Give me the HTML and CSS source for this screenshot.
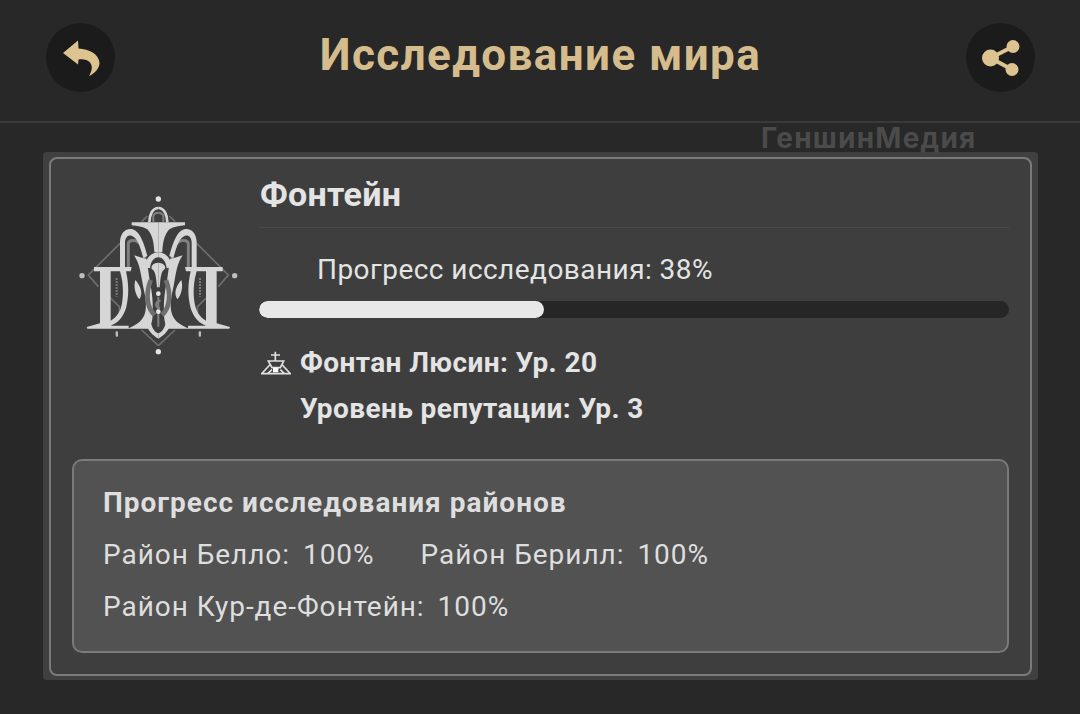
FILE: index.html
```html
<!DOCTYPE html>
<html lang="ru">
<head>
<meta charset="utf-8">
<title>Исследование мира</title>
<link rel="stylesheet" href="styles.css">
</head>
<body>
<header class="header">
  <button class="round-btn" aria-label="Назад">
    <svg width="38" height="38" viewBox="0 0 38 38"><path class="gold" d="M1 14 L16 1.500 L16.500 9.500 C27 10 37 15 37.500 24 C37.500 29 33 34.500 27 37 C30 32 31 27 28 23.500 C25.500 20.500 21 20 16.500 20.500 L16 25.500 Z"/></svg>
  </button>
  <h1 class="title">Исследование мира</h1>
  <button class="round-btn" aria-label="Поделиться">
    <svg width="40" height="38" viewBox="0 0 40 38"><path class="gold-line" d="M9.500 19 L32 7.500 M9.500 19 L31 30.500"/><circle class="gold" cx="9.500" cy="19" r="8.500"/><circle class="gold" cx="32" cy="7.500" r="6.500"/><circle class="gold" cx="31" cy="30.500" r="6.500"/></svg>
  </button>
</header>
<div class="watermark">ГеншинМедия</div>
<main class="page">
  <section class="card">
    <div class="inner">
      <div class="top">
        <div class="emblem">
          <svg width="190" height="180" viewBox="0 0 570 540">
            <g id="half">
              <path class="emb-thin" d="M180 190 L85 285 L115 320 M142 345 L178 380 V405 M245 450 L295 497 M245 125 L262 108"/>
              <path class="emb-dash" d="M170 295 V350"/>
              <circle class="emb-dot" cx="66" cy="287" r="8"/>
              <rect class="emb-dot" x="167" y="454" width="7" height="16" rx="3"/>
              <path class="emb-gray" d="M205 262 V190 C208 178 232 178 243 195 C250 210 254 225 256 250"/>
              <path class="emb-main" d="M180 262 V185 C182 155 200 144 218 148 C240 155 252 190 262 228 L250 234 C242 205 234 174 215 167 C204 164 195 172 195 188 V262 Z"/>
              <path class="emb-main" d="M102 261 H215 L212 274 H198 C206 310 208 345 198 385 C188 415 172 430 152 437 L206 437 V446 H82 L80 441 L120 430 V274 H102 Z M152 274 V422 C170 412 182 395 186 370 C192 335 188 300 180 274 Z"/>
              <path class="emb-main" d="M222 226 C238 250 240 270 246 300 C252 340 262 360 256 395 C250 420 235 432 203 446 H266 C272 440 278 425 278 400 C280 360 274 325 268 295 L260 238 Z"/>
              <path class="emb-main" d="M226 300 C242 318 250 340 238 358 C226 345 220 320 226 300 Z"/>
              <path class="emb-main" d="M256 262 C256 230 278 217 295 217 V232 C282 232 272 245 270 265 Z"/>
              <path class="emb-main" d="M256 425 C262 452 280 467 295 476 V460 C284 456 276 445 272 425 Z"/>
              <path class="emb-main" d="M295 248 C282 248 270 258 276 268 C284 272 288 282 291 322 H295 Z"/>
              <path class="emb-main" d="M215 127 H295 V217 H283 C282 190 278 165 262 148 C248 140 232 138 215 136 Z"/>
              <path class="emb-stroke" d="M268 127 C268 104 278 84 295 84"/>
              <path class="emb-gray-thin" d="M280 127 V108 C282 100 288 98 295 98"/>
            </g>
            <use href="#half" transform="matrix(-1 0 0 1 590 0)"/>
            <path class="emb-ring" d="M272 300 C255 345 262 385 284 405 M318 300 C335 345 328 385 306 405"/>
            <path class="emb-gray-thin" d="M295 350 V440 M302 362 C284 365 284 382 300 384"/>
            <circle class="emb-light" cx="295" cy="57" r="8"/>
            <circle class="emb-light" cx="295" cy="515" r="8"/>
            <circle class="emb-light" cx="295" cy="341" r="7"/>
            <circle class="emb-light" cx="295" cy="395" r="7"/>
          </svg>
        </div>
        <div class="info">
          <h2 class="region">Фонтейн</h2>
          <div class="progress-label">Прогресс исследования: 38%</div>
          <div class="bar"><div class="bar-fill"></div></div>
          <div class="stat">
            <svg class="fountain" width="30" height="24" viewBox="0 0 90 72"><path d="M43 2 V30 M30 12 H57 M22 30 H68 L58 50 H33 Z M26 42 L2 68 H88 L64 42 M20 68 L33 56 M70 68 L58 56"/><rect x="36" y="50" width="16" height="14"/></svg>
            <span>Фонтан Люсин: Ур. 20</span>
          </div>
          <div class="stat rep">Уровень репутации: Ур. 3</div>
        </div>
      </div>
      <div class="districts">
        <h3 class="districts-title">Прогресс исследования районов</h3>
        <div class="row"><span class="item"><span>Район Белло:</span><span>100%</span></span><span class="item"><span>Район Берилл:</span><span>100%</span></span></div>
        <div class="row"><span class="item"><span>Район Кур-де-Фонтейн:</span><span>100%</span></span></div>
      </div>
    </div>
  </section>
</main>
</body>
</html>
```
FILE: styles.css
```css
* { box-sizing: border-box; }
html, body { margin: 0; height: 100%; }
body {
  width: 1080px; height: 714px; overflow: hidden; position: relative;
  background: #282828; color: #e6e6e6;
  font-family: Roboto, "Liberation Sans", sans-serif;
}
.header {
  height: 123px; padding: 23px 45px 0 46px;
  display: flex; justify-content: space-between; align-items: flex-start;
  border-bottom: 2px solid #3a3a3a;
}
.round-btn {
  width: 69px; height: 69px; border: 0; border-radius: 50%; padding: 0;
  background: #1b1b1b; display: flex; align-items: center; justify-content: center;
}
.gold { fill: #dcc38f; }
.gold-line { stroke: #dcc38f; stroke-width: 4; fill: none; }
.title {
  margin: 0; font-size: 44px; line-height: 64px; font-weight: 700;
  color: #d4bc8c; letter-spacing: 1.4px;
}
.watermark {
  position: absolute; left: 761px; top: 122px;
  font-family: Inter, sans-serif; font-size: 28px; line-height: 33px; font-weight: 700;
  color: #4b4b4b; letter-spacing: 1.2px;
}
.page { padding: 29px 42px 0 43px; }
.card { height: 528px; padding: 5px 6px 4px 6px; background: #404040; border-radius: 4px; }
.inner {
  height: 100%; border: 2px solid #7a7a7a; border-radius: 8px;
  background: #3e3e3e; padding: 0 21px 0 21px;
  display: flex; flex-direction: column;
}
.top { display: flex; height: 300px; }
.emblem { width: 199px; margin-left: -12px; flex: none; padding-top: 21px; }
.emblem svg { display: block; }
.info { flex: 1; min-width: 0; }
.region {
  margin: 0; height: 69px; padding: 15px 0 0 1px; font-size: 34px; line-height: 40px; font-weight: 700;
  color: #e4e4e4; letter-spacing: 0.3px; border-bottom: 1px solid #4a4a4a;
}
.progress-label { margin: 24px 0 0 58px; font-size: 28px; line-height: 36px; letter-spacing: 0.45px; color: #e4e4e4; }
.bar { height: 17px; margin-top: 13px; background: #262626; border-radius: 9px; overflow: hidden; }
.bar-fill { width: 38%; height: 100%; background: #e8e8e8; border-radius: 9px; }
.stat { display: flex; align-items: center; gap: 9px; font-size: 28px; line-height: 36px; letter-spacing: 0.4px; font-weight: 700; color: #e4e4e4; margin-top: 27px; }
.stat.rep { margin: 10px 0 0 41px; }
.fountain { fill: none; stroke: #e0e0e0; stroke-width: 5; flex: none; margin-left: 2px; }
.fountain rect { fill: #fff; stroke: none; }
.districts {
  height: 194px; background: #525252; border: 2px solid #7a7a7a; border-radius: 10px;
  padding: 24px 30px 0 29px;
}
.districts-title { margin: 0; font-size: 28px; line-height: 36px; font-weight: 700; color: #dedede; letter-spacing: 1px; }
.row { display: flex; gap: 46px; margin-top: 16px; font-size: 28px; line-height: 36px; color: #dedede; letter-spacing: 0.95px; }
.item { display: flex; gap: 13px; }
.emb-thin { fill: none; stroke: #6e6e6e; stroke-width: 5; }
.emb-dash { fill: none; stroke: #8a8a8a; stroke-width: 6; stroke-dasharray: 4 5; }
.emb-dot { fill: #bdbdbd; }
.emb-light { fill: #e6e6e6; }
.emb-gray { fill: none; stroke: #808080; stroke-width: 9; }
.emb-gray-thin { fill: none; stroke: #808080; stroke-width: 6; }
.emb-ring { fill: none; stroke: #6f6f6f; stroke-width: 14; }
.emb-stroke { fill: none; stroke: #d6d6d6; stroke-width: 8; }
.emb-main { fill: #d6d6d6; fill-rule: evenodd; }
```
